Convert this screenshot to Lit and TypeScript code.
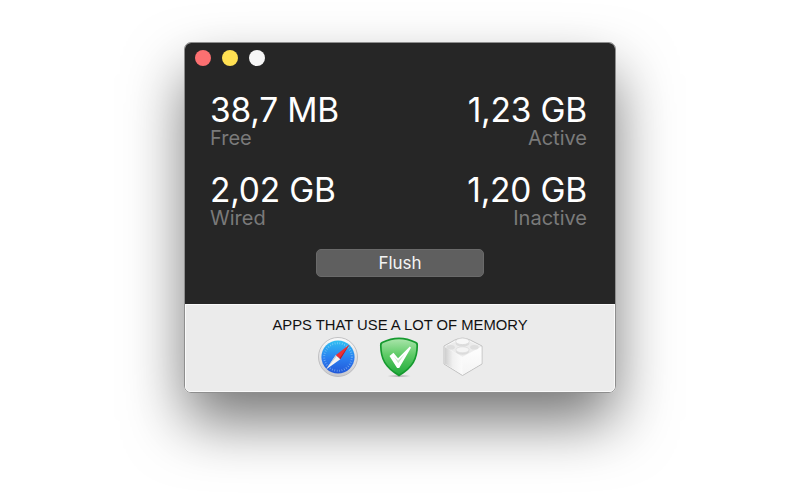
import { LitElement, html, css, svg } from "lit";
import { customElement } from "lit/decorators.js";

const safari = svg`<svg class="icon" width="42" height="42" viewBox="0 0 42 42">
  <defs>
    <linearGradient id="sb" x1="0" y1="0" x2="0" y2="1"><stop offset="0" stop-color="#2fc0f2"/><stop offset="0.55" stop-color="#2a7df0"/><stop offset="1" stop-color="#2258d8"/></linearGradient>
    <linearGradient id="sr" x1="0" y1="0" x2="0" y2="1"><stop offset="0" stop-color="#fbfbfb"/><stop offset="1" stop-color="#c9c9cd"/></linearGradient>
  </defs>
  <circle cx="21" cy="21" r="19.5" fill="url(#sr)" stroke="#b5b5b8" stroke-width="0.8"/>
  <circle cx="21" cy="21" r="16.6" fill="url(#sb)"/>
  <circle cx="21" cy="21" r="13.8" fill="none" stroke="#bfe3fb" stroke-opacity="0.55" stroke-width="2" stroke-dasharray="0.7 1.75"/>
  <polygon points="32.5,8.5 18.7,19.2 23.3,23.3" fill="#ee2f35"/>
  <polygon points="32.5,8.5 23.3,23.3 22.4,22.4" fill="#a81d28"/>
  <polygon points="9,33.5 18.7,19.2 23.3,23.3" fill="#f4f4f4"/>
  <polygon points="9,33.5 18.7,19.2 19.7,20.2" fill="#c7ccd2"/>
</svg>`;

const shield = svg`<svg class="icon" width="40" height="42" viewBox="0 0 42 44">
  <defs>
    <linearGradient id="gb" x1="0" y1="0" x2="0" y2="1"><stop offset="0" stop-color="#a8e4a9"/><stop offset="0.45" stop-color="#5ecb66"/><stop offset="1" stop-color="#22ab3c"/></linearGradient>
    <radialGradient id="gs" cx="0.5" cy="0.5" r="0.5"><stop offset="0" stop-color="#000" stop-opacity="0.3"/><stop offset="1" stop-color="#000" stop-opacity="0"/></radialGradient>
  </defs>
  <ellipse cx="21" cy="42" rx="13" ry="1.6" fill="url(#gs)"/>
  <path d="M21 1.6C27 1.6 33 3.2 39 6C41 7 41 8 41 10C41 24 36 34 21 42.4C6 34 1 24 1 10C1 8 1 7 3 6C9 3.2 15 1.6 21 1.6Z" fill="#169a2f"/>
  <path d="M21 3.4C26.6 3.4 32.4 4.9 37.6 7.4C39 8 39.2 9 39.2 10.4C39.2 23 34.8 32.4 21 40.2C7.2 32.4 2.8 23 2.8 10.4C2.8 9 3 8 4.4 7.4C9.6 4.9 15.4 3.4 21 3.4Z" fill="url(#gb)"/>
  <path d="M11 21L15.2 17.6L20 23.2L32.4 11L33.6 12.4L21.2 33.5H19Z" fill="#ffffff"/>
  <path d="M15.6 21.2L20 26L27 18.8L20.2 28.6Z" fill="#c4ecc7"/>
</svg>`;

const lego = svg`<svg class="icon lego" width="40" height="40" viewBox="0 0 40 40">
  <defs>
    <linearGradient id="lf" x1="0" y1="0" x2="0" y2="1"><stop offset="0" stop-color="#fefefe"/><stop offset="1" stop-color="#f4f4f4"/></linearGradient>
    <linearGradient id="ll" x1="0" y1="0" x2="1" y2="0"><stop offset="0" stop-color="#cdcdcd"/><stop offset="0.45" stop-color="#f0f0f0"/><stop offset="1" stop-color="#fbfbfb"/></linearGradient>
  </defs>
  <path d="M19.5 38.5L1 27V9L11.5 3.2Q19.5 -1 27.5 3.2L39 9V27Z" fill="#f8f8f8" stroke="#c2c2c2" stroke-width="1" stroke-linejoin="round"/>
  <path d="M1.6 10L19.5 20V37.6L1.6 26.5Z" fill="url(#ll)"/>
  <path d="M38.4 10L19.5 20V37.6L38.4 26.5Z" fill="url(#lf)"/>
  <path d="M19.5 1.5L38.4 9.5L19.5 19.8L1.6 9.5Z" fill="#ececec"/>
  <ellipse cx="19.5" cy="6.4" rx="6.8" ry="3.4" fill="#dcdcdc"/>
  <ellipse cx="19.5" cy="4.4" rx="6.8" ry="3.2" fill="#f7f7f7" stroke="#d4d4d4" stroke-width="0.6"/>
  <ellipse cx="7.6" cy="10.2" rx="4.2" ry="2.3" fill="#dedede"/>
  <ellipse cx="31.4" cy="10.2" rx="4.2" ry="2.3" fill="#dedede"/>
  <ellipse cx="19.5" cy="14.6" rx="6.6" ry="3.2" fill="#dcdcdc"/>
  <ellipse cx="19.5" cy="12.8" rx="6.6" ry="3" fill="#f4f4f4" stroke="#d6d6d6" stroke-width="0.6"/>
</svg>`;

@customElement("app-root")
export class AppRoot extends LitElement {
  static styles = css`
    :host {
      display: flex;
      justify-content: center;
      align-items: flex-start;
      height: 500px;
      padding-top: 42px;
      box-sizing: border-box;
      background: #fff;
      overflow: hidden;
      font-family: Inter, "Liberation Sans", sans-serif;
    }
    .window {
      width: 432px;
      height: 351px;
      box-sizing: border-box;
      border: 1px solid #8e8e8e;
      border-radius: 7px;
      display: flex;
      flex-direction: column;
      overflow: hidden;
      box-shadow: 0 30px 60px -2px rgba(0, 0, 0, 0.55);
    }
    .dark {
      height: 261px;
      background: #262626;
      box-sizing: border-box;
      padding: 7px 28px 0 25px;
      display: flex;
      flex-direction: column;
    }
    .lights {
      display: flex;
      gap: 11px;
      margin-left: -15px;
    }
    .light {
      width: 16px;
      height: 16px;
      border-radius: 50%;
    }
    .red { background: #fc7071; }
    .yellow { background: #ffe052; }
    .white { background: #f6f6f6; }
    .stats {
      display: grid;
      grid-template-columns: 1fr 1fr;
      row-gap: 24px;
      margin-top: 26px;
    }
    .stat { display: flex; flex-direction: column; }
    .stat.right { align-items: flex-end; }
    .value {
      font-size: 33.5px;
      line-height: 37px;
      color: #fff;
      letter-spacing: -0.2px;
    }
    .label {
      font-size: 20px;
      line-height: 19px;
      color: #7a7a7a;
      font-weight: 400;
    }
    .flush {
      align-self: center;
      margin: 21px -3px 0 0;
      width: 168px;
      height: 28px;
      border: 1px solid #6a6a6a;
      border-radius: 5px;
      background: #5f5f5f;
      color: #f4f4f4;
      font: inherit;
      font-size: 17px;
      padding: 0;
    }
    .light-panel {
      flex: 1;
      background: #ebebeb;
      border: 1px solid #fafafa;
      border-radius: 0 0 5px 5px;
      display: flex;
      flex-direction: column;
      align-items: center;
      padding-top: 12px;
    }
    .title {
      font-family: "Liberation Sans", Arial, sans-serif;
      font-size: 14.8px;
      line-height: 16px;
      color: #111;
    }
    .icons {
      display: flex;
      align-items: flex-start;
      gap: 20px;
      margin-top: 3px;
    }
    .icon { display: block; }
    .lego { margin: 1px 0 0 4px; }
  `;

  render() {
    const stats = [
      ["38,7 MB", "Free", false],
      ["1,23 GB", "Active", true],
      ["2,02 GB", "Wired", false],
      ["1,20 GB", "Inactive", true],
    ] as const;
    return html`
      <div class="window">
        <div class="dark">
          <div class="lights">
            <span class="light red"></span>
            <span class="light yellow"></span>
            <span class="light white"></span>
          </div>
          <div class="stats">
            ${stats.map(
              ([v, l, r]) => html`<div class="stat ${r ? "right" : ""}">
                <span class="value">${v}</span><span class="label">${l}</span>
              </div>`
            )}
          </div>
          <button class="flush">Flush</button>
        </div>
        <div class="light-panel">
          <div class="title">APPS THAT USE A LOT OF MEMORY</div>
          <div class="icons">${safari}${shield}${lego}</div>
        </div>
      </div>
    `;
  }
}
